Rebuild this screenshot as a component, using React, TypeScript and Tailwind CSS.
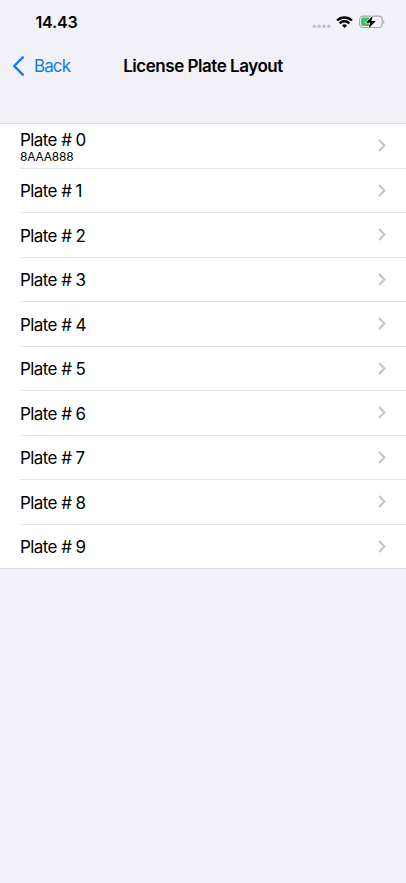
const plates = Array.from({ length: 10 }, (_, i) => ({ id: i, value: i === 0 ? "8AAA888" : "" }));

function StatusBar() {
  return (
    <div className="flex h-11 items-center pr-[21px] pl-[35.5px]">
      <span className="text-[16px] leading-5 font-semibold tracking-[-0.15px]">14.43</span>
      <div className="ml-auto flex items-center">
        <svg width="19" height="6" viewBox="0 0 19 6" className="mt-[8px] mr-[5px]" fill="#c3c2c9">
          <circle cx="2.4" cy="3.2" r="1.8" />
          <circle cx="7.2" cy="3.2" r="1.8" />
          <circle cx="12" cy="3.2" r="1.8" />
          <circle cx="16.8" cy="3.2" r="1.8" />
        </svg>
        <svg width="17" height="12" viewBox="0 0 17 12" className="mr-[6px]" fill="none" stroke="#000" strokeWidth="2.4">
          <path d="M1.1 4.5a10.6 10.6 0 0 1 14.8 0" />
          <path d="M3.7 7.3a6.8 6.8 0 0 1 9.6 0" />
          <path d="M6 9.5a3.7 3.7 0 0 1 5 0L8.5 12Z" fill="#000" stroke="none" />
        </svg>
        <svg width="26" height="14" viewBox="0 0 26 14">
          <rect x="0.6" y="1.1" width="22.6" height="11.4" rx="3.4" fill="none" stroke="#a9a9ae" strokeWidth="1.1" />
          <path d="M24.3 5v4.2c1.5-.6 1.5-3.6 0-4.2Z" fill="#a9a9ae" />
          <path d="M4.1 2.6H10.6V11H4.1A2 2 0 0 1 2.1 9V4.6A2 2 0 0 1 4.1 2.6Z" fill="#34c759" />
          <path d="M13.7 0.7L6.9 7.7H11.2L9.5 13.4L16.8 5.9H12.4Z" fill="#000" stroke="#f2f1f7" strokeWidth="1.2" paintOrder="stroke" />
        </svg>
      </div>
    </div>
  );
}

function NavBar() {
  return (
    <div className="grid h-11 grid-cols-[1fr_auto_1fr] items-center">
      <button className="flex items-center pl-3 text-[#147ce5]">
        <svg width="13" height="20" viewBox="0 0 13 20" fill="none" stroke="#0a7aff" strokeWidth="2.4" strokeLinecap="round" strokeLinejoin="round">
          <path d="M10.8 1.4L2.2 10l8.6 8.6" />
        </svg>
        <span className="ml-[9px] text-[17px] leading-5 tracking-[-0.9px]">Back</span>
      </button>
      <h1 className="text-[17px] leading-5 font-semibold tracking-[-0.47px]">License Plate Layout</h1>
    </div>
  );
}

export default function App() {
  return (
    <div className="flex h-[883px] w-[406px] flex-col overflow-hidden bg-[#f2f1f7] font-['Inter',sans-serif] text-black">
      <StatusBar />
      <NavBar />
      <ul className="mt-[35px] border-y border-[#dedee2] bg-white">
        {plates.map((p) => (
          <li key={p.id} className="flex h-[44.5px] pl-5 last:h-[43.5px]">
            <div className={`flex flex-1 items-center justify-between pr-5 ${p.id < 9 ? "border-b border-[#e4e4e6]" : ""}`}>
              <div className="flex flex-col pt-[1.5px]">
                <span className="text-[17px] leading-5 tracking-[-0.58px]">Plate # {p.id}</span>
                {p.value && <span className="text-[12px] leading-[14px] tracking-[-0.2px]">{p.value}</span>}
              </div>
              <svg width="8" height="13" viewBox="0 0 8 13" fill="none" stroke="#c4c4c7" strokeWidth="2">
                <path d="M1 1l5.5 5.5L1 12" />
              </svg>
            </div>
          </li>
        ))}
      </ul>
    </div>
  );
}
